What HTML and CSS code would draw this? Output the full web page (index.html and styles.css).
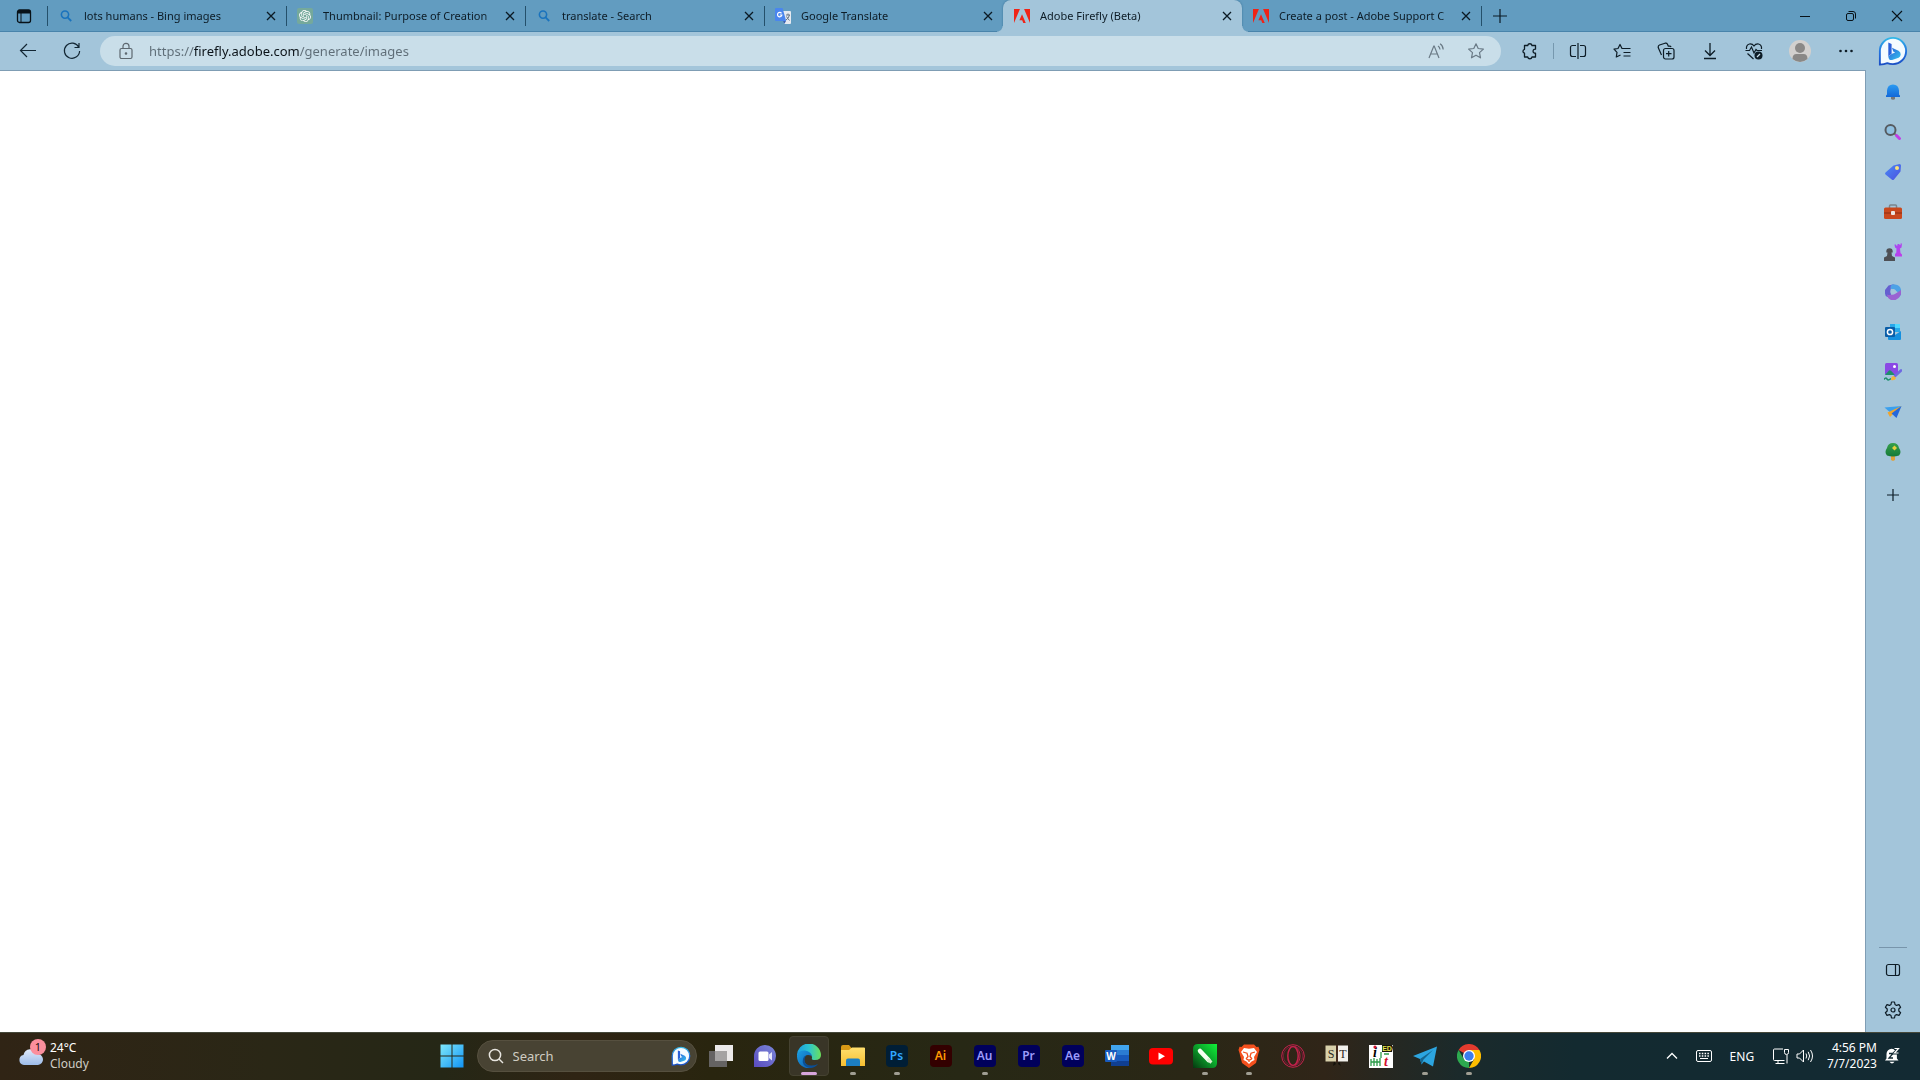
FILE: index.html
```html
<!DOCTYPE html>
<html lang="en">
<head>
<meta charset="utf-8">
<title>Adobe Firefly (Beta)</title>
<link rel="stylesheet" href="styles.css">
</head>
<body>
<svg class="defs" aria-hidden="true">
  <defs>
    <linearGradient id="g-bing" x1="0" y1="0" x2="0" y2="1"><stop offset="0" stop-color="#32b8e8"/><stop offset=".5" stop-color="#2274e0"/><stop offset="1" stop-color="#1b4fc4"/></linearGradient>
    <linearGradient id="g-b" x1="0" y1="0" x2="1" y2="1"><stop offset="0" stop-color="#2a5fd8"/><stop offset="1" stop-color="#36c4ee"/></linearGradient>
    <linearGradient id="g-bell" x1="0" y1="0" x2="0" y2="1"><stop offset="0" stop-color="#2a9bf2"/><stop offset="1" stop-color="#1368d8"/></linearGradient>
    <linearGradient id="g-tag" x1="0" y1="0" x2="1" y2="1"><stop offset="0" stop-color="#4a8cf5"/><stop offset="1" stop-color="#4b4fe0"/></linearGradient>
    <linearGradient id="g-purple" x1="0" y1="0" x2="1" y2="1"><stop offset="0" stop-color="#a24cf4"/><stop offset="1" stop-color="#c23ce8"/></linearGradient>
    <linearGradient id="g-win" x1="0" y1="0" x2="1" y2="1"><stop offset="0" stop-color="#7ee8fb"/><stop offset="1" stop-color="#1193f4"/></linearGradient>
    <linearGradient id="g-edge" x1="0" y1="0" x2="1" y2="0"><stop offset="0" stop-color="#1b9de2"/><stop offset=".5" stop-color="#2cc4cf"/><stop offset="1" stop-color="#6be05a"/></linearGradient>
    <linearGradient id="g-edge2" x1="0" y1="0" x2="1" y2="1"><stop offset="0" stop-color="#1b9de2"/><stop offset="1" stop-color="#0d5cae"/></linearGradient>
    <linearGradient id="g-chat" x1="0" y1="1" x2="1" y2="0"><stop offset="0" stop-color="#5a4bc0"/><stop offset="1" stop-color="#7a87d8"/></linearGradient>
    <linearGradient id="g-folder" x1="0" y1="0" x2="0" y2="1"><stop offset="0" stop-color="#ffdf6e"/><stop offset="1" stop-color="#f7bf31"/></linearGradient>
    <linearGradient id="g-corel" x1="1" y1="0" x2="0" y2="1"><stop offset="0" stop-color="#10f238"/><stop offset=".5" stop-color="#0b9d2a"/><stop offset="1" stop-color="#06380f"/></linearGradient>
    <linearGradient id="g-cloud" x1="0" y1="0" x2="0" y2="1"><stop offset="0" stop-color="#dfe9fa"/><stop offset="1" stop-color="#9dbce9"/></linearGradient>
    <linearGradient id="g-tree" x1="0" y1="0" x2="0" y2="1"><stop offset="0" stop-color="#35a04c"/><stop offset="1" stop-color="#167a37"/></linearGradient>
    <symbol id="close" viewBox="0 0 16 16"><path d="M4 4l8 8M12 4l-8 8" fill="none" stroke="#0b1a24" stroke-width="1.3"/></symbol>
    <symbol id="lens" viewBox="0 0 16 16"><circle cx="7" cy="6.600" r="3.600" fill="none" stroke="#1a73bd" stroke-width="1.600"/><path d="M9.600 9.300L13.200 13" stroke="#1a73bd" stroke-width="1.800"/></symbol>
    <symbol id="adobe" viewBox="0 0 24 24"><path fill="#f02316" d="M13.966 22.624l-1.690-4.281H8.122l3.892-9.144 5.662 13.425zM8.884 1.376H0v21.248zm15.116 0h-8.884L24 22.624Z"/></symbol>
    <symbol id="bing" viewBox="0 0 32 32"><path d="M2 30.500V16A14 14 0 1 1 16 30q-3.500 0-6-1Q6.500 30.500 2 30.500Z" fill="#f5fbff" stroke="url(#g-bing)" stroke-width="2"/><path d="M11 7l3.500 1.500v10.500l-3.500 2.500Z" fill="#2a5fd8"/><path d="M11 21.500l3.500-2.300 3.800-1.700-2-1.100-1.400-4 7 3.200q2.600 1.600 2.300 4.400-.300 2.200-2.200 3.200L15 25.500q-3.500 1-4-4Z" fill="url(#g-b)"/></symbol>
  </defs>
</svg>

<header class="browser">
  <div class="strip">
    <button class="ib tab-actions" aria-label="Tab actions"><svg width="16" height="16" viewBox="0 0 16 16"><rect x="1.500" y="2" width="13" height="12.500" rx="2" fill="none" stroke="#081218" stroke-width="1.300"/><path d="M1.500 5.500V4a2 2 0 0 1 2-2h9a2 2 0 0 1 2 2v1.500Z" fill="#081218"/><path d="M5 5v9.500" stroke="#081218"/></svg></button>
    <nav class="tabs" aria-label="Tabs">
      <div class="tab"><svg class="fav"><use href="#lens"/></svg><a href="#">lots humans - Bing images</a><button class="x" aria-label="Close tab"><svg><use href="#close"/></svg></button></div>
      <div class="tab"><svg class="fav" viewBox="0 0 32 32"><rect width="32" height="32" rx="4" fill="#75a99b"/><g transform="translate(4 4)"><path fill="#fff" d="M22.282 9.821a5.985 5.985 0 0 0-.516-4.911 6.046 6.046 0 0 0-6.510-2.900A6.065 6.065 0 0 0 4.981 4.182a5.985 5.985 0 0 0-3.998 2.900 6.046 6.046 0 0 0 .743 7.097 5.980 5.980 0 0 0 .511 4.911 6.051 6.051 0 0 0 6.515 2.900A5.985 5.985 0 0 0 13.260 24a6.056 6.056 0 0 0 5.772-4.206 5.989 5.989 0 0 0 3.998-2.900 6.056 6.056 0 0 0-.748-7.073zm-9.022 12.608a4.476 4.476 0 0 1-2.876-1.041l.142-.080 4.778-2.758a.795.795 0 0 0 .393-.681v-6.737l2.020 1.169a.071.071 0 0 1 .038.052v5.583a4.504 4.504 0 0 1-4.495 4.494zm-9.661-4.125a4.471 4.471 0 0 1-.535-3.014l.142.085 4.783 2.758a.771.771 0 0 0 .781 0l5.843-3.369v2.332a.080.080 0 0 1-.033.062L9.740 19.950a4.499 4.499 0 0 1-6.141-1.646zM2.341 7.896a4.485 4.485 0 0 1 2.366-1.973V11.600a.766.766 0 0 0 .388.677l5.814 3.354-2.020 1.169a.076.076 0 0 1-.071 0l-4.830-2.787A4.504 4.504 0 0 1 2.341 7.872zm16.596 3.856L13.104 8.364 15.119 7.200a.076.076 0 0 1 .071 0l4.830 2.791a4.494 4.494 0 0 1-.677 8.104v-5.677a.790.790 0 0 0-.407-.667zm2.011-3.023l-.142-.085-4.774-2.782a.776.776 0 0 0-.785 0L9.409 9.230V6.897a.066.066 0 0 1 .028-.062l4.830-2.787a4.499 4.499 0 0 1 6.680 4.660zM8.307 12.863l-2.020-1.164a.080.080 0 0 1-.038-.057V6.074a4.499 4.499 0 0 1 7.376-3.454l-.142.081L8.704 5.459a.795.795 0 0 0-.393.681zm1.097-2.365l2.602-1.500 2.607 1.500v2.999l-2.597 1.500-2.607-1.500Z"/></g></svg><a href="#">Thumbnail: Purpose of Creation</a><button class="x" aria-label="Close tab"><svg><use href="#close"/></svg></button></div>
      <div class="tab"><svg class="fav"><use href="#lens"/></svg><a href="#">translate - Search</a><button class="x" aria-label="Close tab"><svg><use href="#close"/></svg></button></div>
      <div class="tab"><svg class="fav" viewBox="0 0 16 16"><path d="M6 3h9a1 1 0 0 1 1 1v11a1 1 0 0 1-1 1H9.500Z" fill="#e4e9f0"/><path d="M8 13h3l-1.500 2.800Z" fill="#3c5fae"/><path d="M1 0h6.500l3.700 13H1a1 1 0 0 1-1-1V1a1 1 0 0 1 1-1Z" fill="#4a86ee"/><path d="M11 7h4M13 5.500V7M14.500 7q-1 3.500-3.500 5M11.500 8.500q1.500 2.500 3 4" fill="none" stroke="#687785"/><path d="M6.500 5.300A2.200 2.200 0 1 0 6.900 7H4.800" fill="none" stroke="#fff" stroke-width="1.200"/></svg><a href="#">Google Translate</a><button class="x" aria-label="Close tab"><svg><use href="#close"/></svg></button></div>
      <div class="tab active" aria-current="page"><svg class="fav"><use href="#adobe"/></svg><a href="#">Adobe Firefly (Beta)</a><button class="x" aria-label="Close tab"><svg><use href="#close"/></svg></button></div>
      <div class="tab"><svg class="fav"><use href="#adobe"/></svg><a href="#">Create a post - Adobe Support C</a><button class="x" aria-label="Close tab"><svg><use href="#close"/></svg></button></div>
    </nav>
    <button class="ib new-tab" aria-label="New tab"><svg width="16" height="16" viewBox="0 0 16 16"><path d="M8 1v14M1 8h14" stroke="#0b1a24" stroke-width="1.200"/></svg></button>
    <div class="window">
      <button class="ib" aria-label="Minimize"><svg width="12" height="12" viewBox="0 0 12 12"><path d="M1 6.500h10" stroke="#081218"/></svg></button>
      <button class="ib" aria-label="Restore"><svg width="12" height="12" viewBox="0 0 12 12" fill="none" stroke="#081218"><rect x="1.500" y="3.500" width="7" height="7" rx="1.500"/><path d="M3.500 1.500H8A2.500 2.500 0 0 1 10.500 4v4.500"/></svg></button>
      <button class="ib" aria-label="Close"><svg width="12" height="12" viewBox="0 0 12 12"><path d="M1 1l10 10M11 1L1 11" stroke="#081218" stroke-width="1.100"/></svg></button>
    </div>
  </div>

  <div class="toolbar">
    <button class="ib t44" aria-label="Back"><svg width="20" height="20" viewBox="0 0 20 20" fill="none" stroke="#122633" stroke-width="1.200"><path d="M9 3L2.500 9.500 9 16M2.500 9.500H18"/></svg></button>
    <button class="ib t44" aria-label="Refresh"><svg width="20" height="20" viewBox="0 0 20 20" fill="none" stroke="#122633" stroke-width="1.200"><path d="M16.800 6.300A7.600 7.600 0 1 0 17.600 10M17 2v4.500h-4.500"/></svg></button>
    <div class="address">
      <svg width="16" height="18" viewBox="0 0 16 18" fill="none" stroke="#5d6870" stroke-width="1.200"><rect x="2" y="6.500" width="12" height="10" rx="1.500"/><path d="M5 6.500V4.300a3 3 0 0 1 6 0v2.200"/><circle cx="8" cy="11.500" r=".7" fill="#5d6870"/></svg>
      <input type="text" aria-label="Address" value="https://firefly.adobe.com/generate/images">
      <button class="ib t40" aria-label="Read aloud"><svg width="18" height="18" viewBox="0 0 18 18" fill="none" stroke="#6a7a86" stroke-width="1.200"><path d="M2 16L6.800 4h.400L12 16M3.700 12h6.600M11 4q1.800 1 2 3.500M13 1.800q3 1.700 3.200 5.700"/></svg></button>
      <button class="ib t40" aria-label="Favorite"><svg width="18" height="18" viewBox="0 0 18 18" fill="none" stroke="#6a7a86" stroke-width="1.200" stroke-linejoin="round"><path d="M9 1.800l2.200 4.700 5.200.600-3.900 3.500 1 5.200L9 13.200l-4.500 2.600 1-5.200L1.600 7.100l5.200-.600Z"/></svg></button>
    </div>
    <button class="ib t44" aria-label="Extensions"><svg width="18" height="18" viewBox="0 0 18 18" fill="none" stroke="#0d1c26" stroke-width="1.300" stroke-linejoin="round"><path d="M6.700 3.500a2.200 2.200 0 0 1 4.300 0h3.500v3.700a2 2 0 1 0 0 3.900V15H11a2.200 2.200 0 0 1-4.300 0H3.500v-3.800a2 2 0 0 1 0-3.900V3.500Z"/></svg></button>
    <span class="rule"></span>
    <div class="tools">
      <button class="ib t44" aria-label="Split screen"><svg width="18" height="18" viewBox="0 0 18 18" fill="none" stroke="#0d1c26" stroke-width="1.200"><path d="M7 3.500H3.500a2 2 0 0 0-2 2v7a2 2 0 0 0 2 2H7M11 3.500h3.500a2 2 0 0 1 2 2v7a2 2 0 0 1-2 2H11M9 1v16"/></svg></button>
      <button class="ib t44" aria-label="Favorites"><svg width="18" height="18" viewBox="0 0 18 18" fill="none" stroke="#0d1c26" stroke-width="1.200" stroke-linejoin="round"><path d="M10.500 6.500H9L7 2.500l-2 4-4 .600 3 3.200-.700 4.700L7.500 13M10.500 6.500h7M10.500 10.500h7M10.500 14h7"/></svg></button>
      <button class="ib t44" aria-label="Collections"><svg width="18" height="18" viewBox="0 0 18 18" fill="none" stroke="#0d1c26" stroke-width="1.200"><rect x="6.500" y="6.500" width="10.500" height="10.500" rx="2"/><path d="M11.700 9v5.500M9 11.700h5.500M4.500 13L1.300 5.800Q.800 3.800 2.500 3L8 1.200q1.700-.500 2.500 1l.800 2h1.200q1.300 0 1.500 1"/></svg></button>
      <button class="ib t44" aria-label="Downloads"><svg width="18" height="18" viewBox="0 0 18 18" fill="none" stroke="#0d1c26" stroke-width="1.300"><path d="M9 1v12M4 8.500l5 5 5-5M3 16.500h12"/></svg></button>
      <button class="ib t44" aria-label="Browser essentials"><svg width="18" height="18" viewBox="0 0 18 18" fill="none" stroke="#0d1c26" stroke-width="1.200"><path d="M1.500 7Q1 3 4.500 2 7.500 1.700 9 4q1.500-2.300 4.500-2 3.500 1 3 5M2.500 11.500L8.500 17M.5 8.500h4L6.500 5 9 11l2-3.500 1 1h5"/><circle cx="13.500" cy="13.500" r="4" fill="#0d1c26" stroke="none"/><path d="M12 15l3-3" stroke="#c9dee9"/></svg></button>
      <button class="ib t48" aria-label="Profile"><svg width="22" height="22" viewBox="0 0 22 22"><circle cx="11" cy="11" r="11" fill="#d2d0ce"/><circle cx="11" cy="8" r="5" fill="#8a8886"/><path d="M3.500 19q0-5 4-5h7q4 0 4 5Q15 22 11 22t-7.500-3Z" fill="#8a8886"/></svg></button>
      <button class="ib t44" aria-label="Settings and more"><svg width="16" height="16" viewBox="0 0 16 16" fill="#0d1c26"><circle cx="2.500" cy="8" r="1.300"/><circle cx="8" cy="8" r="1.300"/><circle cx="13.500" cy="8" r="1.300"/></svg></button>
      <button class="ib copilot" aria-label="Bing Chat"><svg width="30" height="30"><use href="#bing"/></svg></button>
    </div>
  </div>
</header>

<div class="middle">
  <main class="page"></main>
  <aside class="sidebar" aria-label="Sidebar">
    <button class="ib" aria-label="Notifications"><svg viewBox="0 0 18 18"><path d="M7 14h4v1.200a2 1.500 0 0 1-4 0Z" fill="#777"/><path d="M2 14V12.500l1-1V7.500Q3.500 1.500 9 1.500T15 7.500v4l1 1V14Z" fill="url(#g-bell)"/></svg></button>
    <button class="ib" aria-label="Search"><svg viewBox="0 0 18 18"><path d="M10.500 10.500l3 3" stroke="#777" stroke-width="2"/><path d="M12.500 12.500l3 3" stroke="#c23ce8" stroke-width="3" stroke-linecap="round"/><circle cx="6.500" cy="7" r="5" fill="#8fc0e0" stroke="#565b60" stroke-width="2"/></svg></button>
    <button class="ib" aria-label="Shopping"><svg viewBox="0 0 18 18"><path d="M9.500 2.500L15.500 1Q17 1 17 2.500l-.500 6L10 16.500q-1 1-2 .2L1.500 11.500q-1-1 0-2Z" fill="url(#g-tag)"/><circle cx="13" cy="5" r="2" fill="#fbe27a"/></svg></button>
    <button class="ib" aria-label="Tools"><svg viewBox="0 0 18 18"><path d="M5.500 5V3q0-1 1-1h5q1 0 1 1v2" fill="none" stroke="#7b858c" stroke-width="1.500"/><rect y="4.500" width="18" height="11.500" rx="1.500" fill="#c9481d"/><path d="M0 10h18" stroke="#8c2c12"/><rect x="7" y="8" width="4" height="4" rx="1" fill="#ece5df"/></svg></button>
    <button class="ib" aria-label="Games"><svg viewBox="0 0 18 18"><path d="M10.500 1.500h1.500V2.500h1.500V1h2V2h1V.500H18L17.500 4.500 16 5.500 16.500 10l1.500 1.500V13.500h-7V11l1.300-1.200L12.500 5.500 11 4.500Z" fill="url(#g-purple)"/><path d="M3.500 9.500H2.300V8.500A3.200 3.200 0 1 1 8.700 8.500V9.500H7.500L8 13l3 1.500V18H0V14.500L3 13Z" fill="#4e5055"/></svg></button>
    <button class="ib" aria-label="Microsoft 365"><svg viewBox="0 0 18 18"><path d="M1 10.500V7L4.500 2.500 11 1q-4 1.500-4.500 7L7 12 3.500 14Q1 13 1 10.500Z" fill="#6560d0"/><path d="M8 1.500h3q5 .5 6 5v5l-2 3q.5-5-3.500-7L6.500 5.500Q6 3 8 1.500Z" fill="#4da2e6"/><path d="M3 11.500q3.500 1.500 9.500-1.500L17 7v4.500Q15.500 15 11.500 17H7Q3.500 15.500 3 11.500Z" fill="#9a62d2"/><circle cx="9.200" cy="8.800" r="2.700" fill="#a3c5da"/></svg></button>
    <button class="ib" aria-label="Outlook"><svg viewBox="0 0 18 18"><path d="M6 1h10v8H6Z" fill="#28a8ea"/><path d="M11 1h5v4h-5Z" fill="#50d9ff"/><path d="M4 8l7 4 6-4v8q0 1-1 1H5q-1 0-1-1Z" fill="#1490df"/><rect x="1" y="4" width="10" height="10" rx="1" fill="#0a5ea8"/><circle cx="6" cy="9" r="2.600" fill="none" stroke="#fff" stroke-width="1.500"/></svg></button>
    <button class="ib" aria-label="Image Creator"><svg viewBox="0 0 18 18"><rect x="1" y="0" width="13" height="12" rx="1.500" fill="#8a49e5"/><path d="M1 12l4-4.500q1-.500 2 .300L11 12H1Z" fill="#1e8f6a"/><circle cx="10.500" cy="3.500" r="1.500" fill="#fff"/><path d="M0 16.500q1.500-2.500 3-.500t4-.500" fill="none" stroke="#1e8f6a" stroke-width="1.500"/><path d="M11 13l6-5.500" stroke="#6e68e2" stroke-width="2.600" stroke-linecap="round"/><path d="M7 17q0-4 3-4l2 2q-1 3-5 2Z" fill="#f3b33c"/></svg></button>
    <button class="ib" aria-label="Drop"><svg viewBox="0 0 18 18"><path d="M.500 4.500L17.500 3 8 11Z" fill="#3aa0ee"/><path d="M3.500 9.500L17.500 3 6 14Z" fill="#efa52e"/><path d="M17.500 3L12.500 15 7.500 10.500Z" fill="#2468dc"/></svg></button>
    <button class="ib" aria-label="Tree"><svg viewBox="0 0 18 18"><path d="M7 11h4v6l-2 1-2-1Z" fill="#e0a13a"/><path d="M9 0q5 0 6 5 3 4 0 7.500-6 2-12 0Q0 9 3 5 4 0 9 0Z" fill="url(#g-tree)"/><path d="M10.500 2.500l2.500 2.500-2.500 2.500L8 5Z" fill="#e5cf3e"/></svg></button>
    <button class="ib add" aria-label="Add"><svg viewBox="0 0 18 18"><path d="M9 3v12M3 9h12" stroke="#0d1c26" stroke-width="1.200"/></svg></button>
    <hr>
    <button class="ib" aria-label="Hide sidebar"><svg viewBox="0 0 18 18" fill="none" stroke="#0d1c26" stroke-width="1.200"><rect x="2.500" y="3.500" width="13" height="11" rx="2"/><path d="M11.500 3.500v11"/></svg></button>
    <button class="ib" aria-label="Settings"><svg viewBox="0 0 18 18" fill="none" stroke="#0d1c26" stroke-width="1.200" stroke-linejoin="round"><path d="M7.500 1h3l.5 2.500 1.500.9L15 3.600l1.600 2.700L14.800 8v2l1.800 1.700-1.600 2.700-2.500-.8-1.500.9-.500 2.500h-3L7 14.500l-1.500-.9-2.500.8-1.600-2.700L3.200 10V8L1.400 6.300 3 3.600l2.500.8L7 3.500Z"/><circle cx="9" cy="9" r="2"/></svg></button>
  </aside>
</div>

<footer class="taskbar">
  <button class="weather">
    <span class="cloud"><svg width="26" height="20" viewBox="0 0 26 20"><path d="M6 19a5 5 0 0 1-.500-9.900A7 7 0 0 1 19 8a5.500 5.500 0 0 1 1 11Z" fill="url(#g-cloud)"/></svg><span class="badge">1</span></span>
    <span class="two"><span>24°C</span><span class="dim">Cloudy</span></span>
  </button>

  <div class="apps">
    <button class="app" aria-label="Start"><svg viewBox="0 0 24 24" fill="url(#g-win)"><path d="M.500.500h11v11H.500ZM12.500.500h11v11h-11ZM.500 12.500h11v11H.500ZM12.500 12.500h11v11h-11Z"/></svg></button>
    <label class="search"><svg width="16" height="16" viewBox="0 0 16 16" fill="none" stroke="#e8e6e0" stroke-width="1.500"><circle cx="7" cy="7" r="5.600"/><path d="M11 11l4 4"/></svg><input type="text" placeholder="Search" aria-label="Search"><svg width="20" height="20"><use href="#bing"/></svg></label>
    <button class="app" aria-label="Task view"><svg viewBox="0 0 24 24"><path d="M6 1h18v16H6Z" fill="#eceaea"/><path d="M0 7h18v16H0Z" fill="#656363"/><path d="M6 7h12v10H6Z" fill="#a5a3a3"/></svg></button>
    <button class="app" aria-label="Chat"><svg viewBox="0 0 24 24"><path d="M1 23V12A11 11 0 1 1 12.500 23Z" fill="url(#g-chat)"/><rect x="5.500" y="7.500" width="10" height="9.500" rx="1.500" fill="#fff"/><path d="M16 10.500l3-2.500v8.500L16 14Z" fill="#e4e6fa"/></svg></button>
    <button class="app current" aria-label="Edge"><svg viewBox="0 0 24 24"><path d="M0 12A12 12 0 0 1 24 11q0 5-6 5-4 0-3-2 .5-3-3-4.500Q5 7 0 12Z" fill="url(#g-edge)"/><path d="M0 12q1-6 8-5.500 6 1 7 5.500Q8 9 7 15q0 6 8 9A12 12 0 0 1 0 12Z" fill="url(#g-edge2)"/><path d="M9 11.500Q6 16 9 20q5 3 12 0-3 4-8 4Q4 22 6 15q.5-3 3-3.500Z" fill="#0b4f96"/></svg></button>
    <button class="app running" aria-label="File Explorer"><svg viewBox="0 0 24 24"><path d="M0 3q0-2 2-2h6l2.500 3H24v8H0Z" fill="#d99a16"/><path d="M0 6h8l3-2.500h12q1 0 1 1V22H0Z" fill="url(#g-folder)"/><path d="M5 22v-5.500q0-2 2-2h10q2 0 2 2V22Z" fill="#1c7fc4"/></svg></button>
    <button class="app running" aria-label="Photoshop"><span class="cc ps">Ps</span></button>
    <button class="app" aria-label="Illustrator"><span class="cc ai">Ai</span></button>
    <button class="app running" aria-label="Audition"><span class="cc">Au</span></button>
    <button class="app" aria-label="Premiere Pro"><span class="cc">Pr</span></button>
    <button class="app" aria-label="After Effects"><span class="cc">Ae</span></button>
    <button class="app" aria-label="Word"><svg viewBox="0 0 24 24"><path d="M6 1h18v6H6Z" fill="#41a5ee"/><path d="M6 6h18v6H6Z" fill="#2b7cd3"/><path d="M6 11h18v6H6Z" fill="#185abd"/><path d="M6 17h18v5H6Z" fill="#103f91"/><rect y="6" width="12" height="12" rx="1" fill="#185abd"/><text x="6" y="16" class="w">W</text></svg></button>
    <button class="app" aria-label="YouTube"><svg viewBox="0 0 24 24"><rect y="4" width="24" height="16.500" rx="4" fill="#f00"/><path d="M9.500 8.500l6.500 3.700-6.500 3.800Z" fill="#fff"/></svg></button>
    <button class="app running" aria-label="CorelDRAW"><svg viewBox="0 0 24 24"><path d="M5 0h19v19q0 5-5 5H0V5q0-5 5-5Z" fill="url(#g-corel)"/><path d="M7 7l8.500 9" stroke="#f4fff0" stroke-width="4.500" stroke-linecap="round"/><path d="M14.500 15l4 3.500" stroke="#d9efcf" stroke-width="3"/></svg></button>
    <button class="app running" aria-label="Brave"><svg viewBox="0 0 24 24"><path d="M7 .500h10l2.500 2.500 2-.200L22.500 6l-1 3-2.500 10L12 24 5 19 2.500 9 1.500 6l1-3.200 2 .2Z" fill="#f4501e"/><path d="M7 4l5 .8L17 4l3 4-3 5 .500 3-3 1.500L12 20l-2.500-2.500-3-1.500 .500-3-3-5Z" fill="#fff"/><path d="M6 8l4 1.200 1 3.300L9 15M18 8l-4 1.200-1 3.300 2 2.500M9 15l3 1.200 3-1.200M12 16v2" fill="none" stroke="#f4501e" stroke-width="1.300"/></svg></button>
    <button class="app" aria-label="Opera GX"><svg viewBox="0 0 24 24" fill="none" stroke="#c4224c"><circle cx="12" cy="12" r="11.300"/><circle cx="12" cy="12" r="9.700" stroke="#721c37"/><ellipse cx="12" cy="12" rx="5.200" ry="9.500" stroke-width="1.500"/><path d="M14 2.700q5 3 5 9.300t-5 9.300"/></svg></button>
    <button class="app" aria-label="Dictionary"><svg viewBox="0 0 24 24"><path d="M9 17l-1 5 3-2M14 17l2 5-3-2" fill="#14120c"/><path d="M.500 1.500H11v16H.500Z" fill="#d9d1ab"/><path d="M13 1.500h10v16H13Z" fill="#f3f1ec"/><path d="M12 1v17" stroke="#4b2c20" stroke-width="1.500"/><text x="6" y="14" class="book">S</text><text x="18" y="14" class="book">T</text></svg></button>
    <button class="app" aria-label="iTed"><svg viewBox="0 0 24 24"><path d="M0 1h24v23H0Z" fill="#fff"/><text x="6" y="13" class="it-i">i</text><circle cx="6" cy="3" r="1.600" fill="#d2132e"/><text x="17" y="22" class="it-t">t</text><path d="M12 8v6M15 10h5M2 15v7M5 14v8M8 15v7M11 14v8M2 18h9" stroke="#2c9c49" stroke-width="1.300"/><path d="M13 1h10l1 2-1 5H13Z" fill="#17170a"/><text x="18" y="7" class="it-ed">ED</text></svg></button>
    <button class="app running" aria-label="Telegram"><svg viewBox="0 0 24 24"><path d="M0 12L24 2.500 20 22.500 11 17.500 8.500 20.500 7 15Z" fill="#2ca5e0"/><path d="M7 15L20 6 10.500 15.500 8.500 20.500Z" fill="#15658f"/></svg></button>
    <button class="app running" aria-label="Chrome"><svg viewBox="0 0 24 24"><path d="M12 12L1.600 6A12 12 0 0 1 22.400 6Z" fill="#e33b2e"/><path d="M12 12L12 24A12 12 0 0 1 1.600 6l5.200 9Z" fill="#2da94f"/><path d="M12 6h10.400A12 12 0 0 1 12 24l5.200-9Z" fill="#fdbd00"/><circle cx="12" cy="12" r="6" fill="#fff"/><circle cx="12" cy="12" r="4.700" fill="#3b7ded"/></svg></button>
  </div>

  <div class="tray">
    <button class="ib tr" aria-label="Show hidden icons"><svg width="12" height="12" viewBox="0 0 12 12"><path d="M1 8.500l5-5 5 5" fill="none" stroke="#fff" stroke-width="1.300"/></svg></button>
    <button class="ib tr" aria-label="Touch keyboard"><svg width="16" height="12" viewBox="0 0 16 12" fill="none" stroke="#fff"><rect x=".500" y=".500" width="15" height="11" rx="1.500"/><path d="M3 3.500h10M3 6h10" stroke-dasharray="1.500 1.300" stroke-width="1.300"/><path d="M4 8.500h8"/></svg></button>
    <button class="lang">ENG</button>
    <button class="net" aria-label="Network and volume"><svg width="18" height="18" viewBox="0 0 18 18" fill="none" stroke="#fff"><path d="M11 2H2.500q-1 0-1 1v9.500q0 1 1 1h10M6 13.500v3M3.500 16.500h9M15 8v8.500M12.500 2.500h4v3q0 2-2 2t-2-2Z"/></svg><svg width="18" height="18" viewBox="0 0 18 18" fill="none" stroke="#fff" stroke-linejoin="round"><path d="M1 7h2.500l4-4v12l-4-4H1ZM10 6.500q1.500 2.500 0 5M12.200 4.800q2.800 4.200 0 8.400M14.500 3q4 6 0 12"/></svg></button>
    <button class="clock"><span class="two"><span>4:56 PM</span><span>7/7/2023</span></span>
      <svg width="16" height="18" viewBox="0 0 16 18"><path d="M1 13.500l1.500-2V7a5.200 5.200 0 0 1 10.400 0v4.500l1.600 2ZM5.500 14.800h5q-2.500 3.200-5 0Z" fill="#fff"/><path d="M5 6.500h4l-4 4.500h4" fill="none" stroke="#132a33" stroke-width="1.300"/><path d="M10 1.500h4.500L10.500 6H15" fill="none" stroke="#132a33" stroke-width="3"/><path d="M10.500 1.500h4L10.500 6h4" fill="none" stroke="#fff" stroke-width="1.200"/></svg></button>
  </div>
</footer>
</body>
</html>
```
FILE: styles.css
```css
* { box-sizing: border-box; }

:root {
  --strip: #629cc0;
  --bar: #a3c5da;
  --field: #c9dee9;
  --ink: #0d1c26;
}

body {
  margin: 0;
  min-height: 100vh;
  display: flex;
  flex-direction: column;
  font-family: "Noto Sans", "Open Sans", sans-serif;
  font-size: 12px;
  color: var(--ink);
  background: #fff;
}

button {
  border: 0;
  padding: 0;
  margin: 0;
  background: none;
  font: inherit;
  color: inherit;
}

svg { display: block; flex: none; }
.defs { position: absolute; width: 0; height: 0; }
.ib { display: flex; align-items: center; justify-content: center; flex: none; }

/* Tab strip */
.strip {
  display: flex;
  height: 32px;
  background: var(--strip);
  box-shadow: inset 0 -1px #4984ab;
}
.tab-actions { width: 47px; }
.tabs { display: flex; flex: 0 1 1434px; min-width: 0; }
.tab {
  position: relative;
  display: flex;
  align-items: center;
  flex: 1 1 0;
  min-width: 0;
  padding: 0 7px 0 11px;
}
.tab::before {
  content: "";
  position: absolute;
  left: 0;
  top: 6px;
  bottom: 6px;
  width: 1px;
  background: #24506b;
}
.tab.active::before, .tab.active + .tab::before { display: none; }
.fav { width: 16px; height: 16px; margin-right: 10px; }
.tab a {
  flex: 1;
  min-width: 0;
  margin-right: 2px;
  overflow: hidden;
  white-space: nowrap;
  color: var(--ink);
  text-decoration: none;
  font-size: 11px;
  line-height: 16px;
  -webkit-mask-image: linear-gradient(to left, transparent, #000 16px);
  mask-image: linear-gradient(to left, transparent, #000 16px);
}
.x svg { width: 16px; height: 16px; }
.tab.active {
  z-index: 1;
  background: var(--bar);
  border-radius: 8px 8px 0 0;
  box-shadow: 0 0 2px #2f6a90;
  clip-path: inset(0 -8px 0 -8px);
}
.tab.active::after {
  content: "";
  position: absolute;
  left: -6px;
  right: -6px;
  bottom: 0;
  height: 6px;
  z-index: -1;
  background:
    radial-gradient(circle at 0 0, transparent 5px, var(--bar) 6px) left / 6px 6px no-repeat,
    radial-gradient(circle at 100% 0, transparent 5px, var(--bar) 6px) right / 6px 6px no-repeat;
}
.new-tab { width: 36px; border-left: 1px solid #24506b; height: 20px; margin-top: 6px; }
.window { display: flex; margin-left: auto; }
.window .ib { width: 46px; }

/* Toolbar */
.toolbar {
  display: flex;
  align-items: center;
  height: 38px;
  padding-left: 6px;
  background: var(--bar);
}
.t40 { width: 40px; height: 30px; }
.t44 { width: 44px; height: 30px; }
.t48 { width: 48px; height: 30px; }
.address {
  display: flex;
  align-items: center;
  flex: 1;
  height: 30px;
  margin: 0 7px 0 6px;
  padding: 0 5px 0 18px;
  border-radius: 15px;
  background: var(--field);
}
.address input {
  flex: 1;
  min-width: 0;
  height: 20px;
  margin-left: 15px;
  padding: 0;
  border: 0;
  outline: 0;
  font: 13px/20px "Noto Sans", "Open Sans", sans-serif;
  color: transparent;
  background: linear-gradient(90deg, #5e6d77 45px, #0a1218 45px, #0a1218 150px, #5e6d77 150px);
  -webkit-background-clip: text;
  background-clip: text;
}
.rule { width: 1px; height: 16px; margin: 0 2px 0 1px; background: #7698ae; }
.tools { display: flex; align-items: center; }
.copilot { width: 50px; height: 32px; margin-right: 2px; }

/* Page and sidebar */
.middle { display: flex; flex: 1; background: var(--bar); }
.page {
  flex: 1;
  background: #fff;
  border-top: 1px solid #7f9db4;
  border-right: 1px solid #7f9db4;
}
.sidebar {
  width: 54px;
  display: flex;
  flex-direction: column;
  align-items: center;
  padding: 2px 0;
}
.sidebar .ib { width: 40px; height: 40px; }
.sidebar svg { width: 18px; height: 18px; }
.sidebar .add { margin-top: 3px; }
.sidebar hr { width: 28px; margin: auto 0 2px; border: 0; border-top: 1px solid #7895ab; }

/* Taskbar */
.taskbar {
  display: grid;
  grid-template-columns: 1fr auto 1fr;
  align-items: center;
  height: 48px;
  box-shadow: inset 0 1px #45483a;
  color: #fff;
  background: linear-gradient(90deg, #302415 0, #2a2716 14%, #252716 23%, #2f2414 30%, #29250f 37%, #272815 50%, #2a2716 62%, #302518 69%, #1b2a2b 76%, #132a30 82%, #132a33 100%);
}
.two { display: flex; flex-direction: column; line-height: 16px; }
.dim { color: #cfcdc6; }
.weather { display: flex; align-items: center; gap: 6px; padding-left: 18px; text-align: left; justify-self: start; }
.cloud { position: relative; }
.badge {
  position: absolute;
  left: 12px;
  top: -7px;
  width: 16px;
  height: 16px;
  border-radius: 8px;
  background: #fb8f9d;
  color: #1b1113;
  font-size: 11px;
  line-height: 16px;
  text-align: center;
}
.apps { display: flex; align-items: center; }
.app {
  position: relative;
  display: flex;
  align-items: center;
  justify-content: center;
  width: 44px;
  height: 40px;
}
.app svg { width: 24px; height: 24px; }
.current::before {
  content: "";
  position: absolute;
  inset: 0 2px;
  border: 1px solid #454231;
  border-radius: 4px;
  background: #393527;
}
.current svg { position: relative; }
.running::after, .current::after {
  content: "";
  position: absolute;
  bottom: 1px;
  left: 19px;
  width: 6px;
  height: 3px;
  border-radius: 2px;
  background: #a09e93;
}
.current::after { left: 14px; width: 16px; background: #d8a5dc; }
.search {
  display: flex;
  align-items: center;
  width: 220px;
  height: 32px;
  margin: 0 2px 0 3px;
  padding: 0 5px 0 10px;
  gap: 9px;
  border: 1px solid #56503f;
  border-radius: 16px;
  background: #484333;
}
.search input {
  flex: 1;
  min-width: 0;
  padding: 0;
  border: 0;
  outline: 0;
  background: none;
  color: #fff;
  font: 13px/20px "Noto Sans", "Open Sans", sans-serif;
}
.search input::placeholder { color: #cfccc2; opacity: 1; }
.cc {
  width: 22px;
  height: 22px;
  border-radius: 4px;
  background: #00005b;
  color: #9c9bfb;
  font-size: 12px;
  font-weight: 600;
  line-height: 21px;
  text-align: center;
}
.cc.ps { background: #001e36; color: #31a8ff; }
.cc.ai { background: #330000; color: #ff9a00; }
.w, .book, .it-i, .it-t, .it-ed { text-anchor: middle; }
.w { font-size: 10px; font-weight: 700; fill: #fff; }
.book { font: 12px "Liberation Serif", serif; fill: #2b2824; }
.it-i { font: italic 700 14px "Liberation Serif", serif; fill: #000; }
.it-t { font: italic 700 14px "Liberation Serif", serif; fill: #d2132e; }
.it-ed { font: 700 7px "Liberation Sans", sans-serif; fill: #e6e24a; }

.tray { display: flex; align-items: center; justify-self: end; height: 40px; padding-right: 20px; }
.tr { width: 32px; height: 40px; }
.lang { width: 44px; }
.net { display: flex; gap: 6px; padding: 0 7px 0 8px; }
.clock { display: flex; align-items: center; gap: 7px; padding-left: 6px; text-align: right; }
```
